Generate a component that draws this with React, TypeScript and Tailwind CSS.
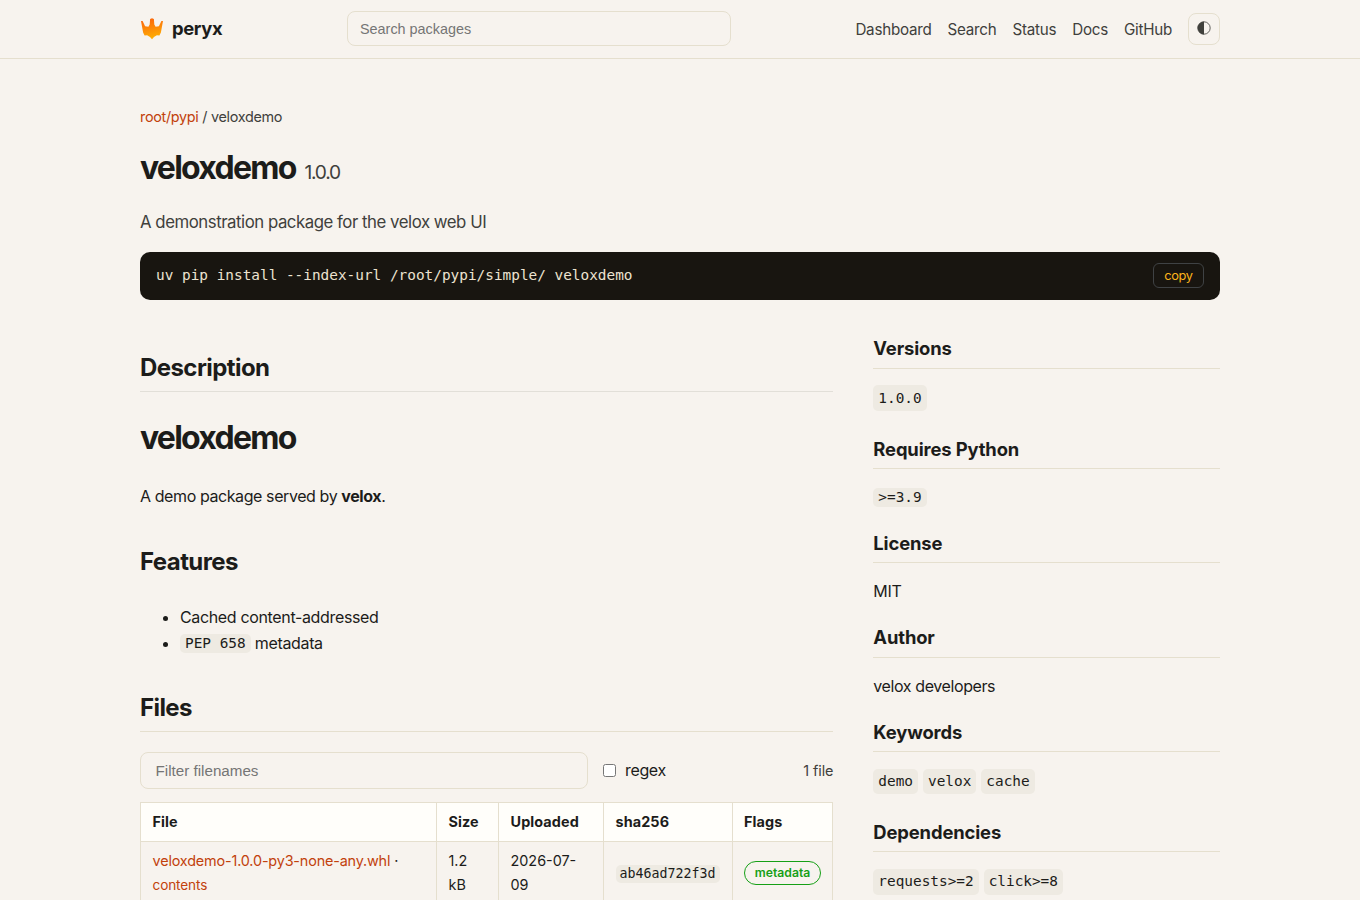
import type { ReactNode } from "react";

const mono = "font-['DejaVu_Sans_Mono',monospace] tracking-normal";

function Logo() {
  return (
    <svg width="24" height="24" viewBox="0 0 24 24" className="block shrink-0">
      <defs>
        <linearGradient id="flame" x1="0" y1="0" x2="0.25" y2="1">
          <stop offset="0" stopColor="#fb5f0c" />
          <stop offset="1" stopColor="#feac04" />
        </linearGradient>
      </defs>
      <path
        fill="url(#flame)"
        d="M10.1 2 L12 1.3 L13.9 2 L14.3 7.6 L15.6 9.8 L18.9 9.2 L21.4 4 L23 3.9 L20.9 15.4 L19.4 18.4 L16.9 18.2 L15.2 19.2 L14 20.1 L12 22.2 L10 20.1 L8.8 19.2 L7.1 18.2 L4.6 18.4 L3.1 15.4 L1 3.9 L2.6 4 L5.1 9.2 L8.4 9.8 L9.7 7.6 Z"
      />
    </svg>
  );
}

function Code({ children, size = "md" }: { children: ReactNode; size?: "md" | "sm" }) {
  return (
    <code
      className={`${mono} inline-block rounded-[5px] bg-[#eeeae2] ${
        size === "sm"
          ? "h-[18px] px-[4px] text-[13.3px] leading-[18px]"
          : "relative -top-px h-[19px] px-[5px] text-[14.4px] leading-[18px]"
      }`}
    >
      {children}
    </code>
  );
}

function Chip({ children }: { children: ReactNode }) {
  return (
    <li className={`${mono} rounded-[5px] bg-[#eeeae2] px-[5px] text-[14.4px]`}>
      {children}
    </li>
  );
}

function SideSection({ title, className, children }: { title: string; className: string; children: ReactNode }) {
  return (
    <section className={className}>
      <h3 className="h-[33px] border-b border-[#e5dfce] text-[18.4px] font-bold tracking-[-0.13px]">{title}</h3>
      {children}
    </section>
  );
}

export default function App() {
  return (
    <div className="h-[900px] overflow-hidden bg-[#f7f3ee] font-['Inter',sans-serif] text-[16px] leading-[26px] tracking-[-0.35px] text-[#1c1c1a]">
      <header className="h-[59px] border-b border-[#e5dfce]">
        <div className="mx-auto flex h-[58px] w-[1080px] items-center">
          <a className="flex w-[207px] items-center gap-2 text-[18.4px] font-bold tracking-[-0.35px]">
            <Logo />
            <span className="-mt-0.5">peryx</span>
          </a>
          <input
            placeholder="Search packages"
            className="mt-[-1px] h-[35px] w-[384px] rounded-lg border border-[#e5dfce] bg-transparent px-3 font-['Liberation_Sans',sans-serif] text-[14.4px] tracking-normal placeholder:text-[#757575]"
          />
          <nav className="ml-auto flex items-center gap-4 text-[15.2px] tracking-[-0.25px] text-[#40403c] [&_a]:pt-0.5">
            <a>Dashboard</a>
            <a>Search</a>
            <a>Status</a>
            <a>Docs</a>
            <a>GitHub</a>
            <button className="flex h-8 w-8 items-center justify-center rounded-lg border border-[#e5dfce]">
              <svg width="14" height="14" viewBox="0 0 14 14" className="-mt-0.5">
                <circle cx="7" cy="7" r="6.2" fill="none" stroke="#40403c" strokeWidth="0.8" />
                <path d="M7 0.6 A6.4 6.4 0 0 0 7 13.4 Z" fill="#40403c" />
              </svg>
            </button>
          </nav>
        </div>
      </header>

      <main className="mx-auto w-[1080px] pt-[46px]">
        <p className="text-[14.4px] leading-6 tracking-[-0.3px] text-[#40403c]">
          <a className="text-[#c2410c]">root/pypi</a> / veloxdemo
        </p>
        <h1 className="mt-[19px] text-[32px] leading-10 font-bold tracking-[-1.75px]">
          veloxdemo <span className="ml-[3px] text-[19.2px] font-normal tracking-[-1.2px] text-[#40403c]">1.0.0</span>
        </h1>
        <p className="mt-[17px] h-[26px] text-[16.8px] tracking-[-0.465px] text-[#40403c]">
          A demonstration package for the velox web UI
        </p>
        <div className="mt-[17px] flex h-12 items-center justify-between rounded-[10px] bg-[#181510] px-4">
          <code className={`${mono} -mt-0.5 text-[14.4px] text-[#ede3d0]`}>
            uv pip install --index-url /root/pypi/simple/ veloxdemo
          </code>
          <button className="-mt-0.5 h-[25px] w-[51px] rounded-md border border-[#3f4244] text-[12.8px] leading-[23px] text-[#fbb31b]">
            copy
          </button>
        </div>

        <div className="grid grid-cols-[2fr_1fr] gap-10">
          <div>
            <h2 className="mt-[52px] h-10 border-b border-[#e2dfd8] text-[24px] leading-8 font-bold tracking-[-0.57px]">
              Description
            </h2>
            <h1 className="mt-[26px] text-[32px] leading-10 font-bold tracking-[-1.75px]">veloxdemo</h1>
            <p className="mt-[25px] tracking-[-0.41px]">
              A demo package served by <strong>velox</strong>.
            </p>
            <h2 className="mt-[37px] text-[24px] leading-8 font-bold tracking-[-0.57px]">Features</h2>
            <ul className="mt-[26px] list-disc pl-10">
              <li className="h-[26px]">Cached content-addressed</li>
              <li className="h-[26px]">
                <Code>PEP 658</Code> metadata
              </li>
            </ul>
            <h2 className="mt-[36px] h-10 border-b border-[#e5dfce] text-[24px] leading-8 font-bold tracking-[-0.6px]">
              Files
            </h2>
            <div className="mt-5 flex h-[37px] items-center">
              <input
                placeholder="Filter filenames"
                className="h-[37px] w-[448px] rounded-lg border border-[#e5dfce] bg-transparent px-[14.5px] font-['Liberation_Sans',sans-serif] text-[15.2px] tracking-normal placeholder:text-[#757575]"
              />
              <label className="ml-[15px] flex items-center gap-[9px]">
                <input type="checkbox" className="h-[13px] w-[13px]" />
                <span className="-mt-px">regex</span>
              </label>
              <span className="ml-auto text-[14.4px] tracking-[-0.1px] text-[#40403c]">1 file</span>
            </div>
            <table className="mt-[13px] w-[693px] table-fixed border-collapse text-[14.4px] leading-6 tracking-normal [&_td]:border [&_td]:border-[#e5dfce] [&_td]:pl-[11.5px] [&_th]:border [&_th]:border-[#e5dfce] [&_th]:pl-[11.5px]">
              <colgroup>
                <col className="w-[296px]" />
                <col className="w-[62px]" />
                <col className="w-[105px]" />
                <col className="w-[129px]" />
                <col className="w-[100px]" />
              </colgroup>
              <thead>
                <tr className="h-[39px] bg-[#fffefa] text-left tracking-[0.1px]">
                  <th>File</th>
                  <th>Size</th>
                  <th>Uploaded</th>
                  <th>sha256</th>
                  <th>
                    <span className="-ml-[0.5px]">Flags</span>
                  </th>
                </tr>
              </thead>
              <tbody>
                <tr className="h-[63px]">
                  <td>
                    <a className="tracking-[-0.16px] text-[#c2410c]">veloxdemo-1.0.0-py3-none-any.whl</a> ·<br />
                    <a className="text-[13.6px] tracking-[-0.12px] text-[#c2410c]">contents</a>
                  </td>
                  <td className="pr-[11px]">1.2 kB</td>
                  <td>
                    2026-07-
                    <br />
                    09
                  </td>
                  <td>
                    <Code size="sm">ab46ad722f3d</Code>
                  </td>
                  <td>
                    <span className="-ml-[0.5px] block h-6 w-[77px] rounded-full border border-[#16a016] text-center text-[12.2px] leading-[22px] font-semibold text-[#16a016]">
                      metadata
                    </span>
                  </td>
                </tr>
              </tbody>
            </table>
          </div>

          <aside>
            <SideSection title="Versions" className="mt-9 leading-[25px]">
              <ul className="mt-4 flex leading-[26px]">
                <Chip>1.0.0</Chip>
              </ul>
            </SideSection>
            <SideSection title="Requires Python" className="mt-[25px]">
              <p className="mt-[15px] h-[26px]">
                <Code>&gt;=3.9</Code>
              </p>
            </SideSection>
            <SideSection title="License" className="mt-[20px]">
              <p className="mt-[15px]">MIT</p>
            </SideSection>
            <SideSection title="Author" className="mt-[21px] leading-[25px]">
              <p className="mt-[15px] h-[27px] leading-[26px] tracking-[-0.4px]">velox developers</p>
            </SideSection>
            <SideSection title="Keywords" className="mt-[19px]">
              <ul className="mt-[17px] flex gap-[5px] leading-[25px]">
                <Chip>demo</Chip>
                <Chip>velox</Chip>
                <Chip>cache</Chip>
              </ul>
            </SideSection>
            <SideSection title="Dependencies" className="mt-[25px]">
              <ul className="mt-[17px] flex h-[26px] gap-[5px] leading-[25px]">
                <Chip>requests&gt;=2</Chip>
                <Chip>click&gt;=8</Chip>
              </ul>
            </SideSection>
          </aside>
        </div>
      </main>
    </div>
  );
}
